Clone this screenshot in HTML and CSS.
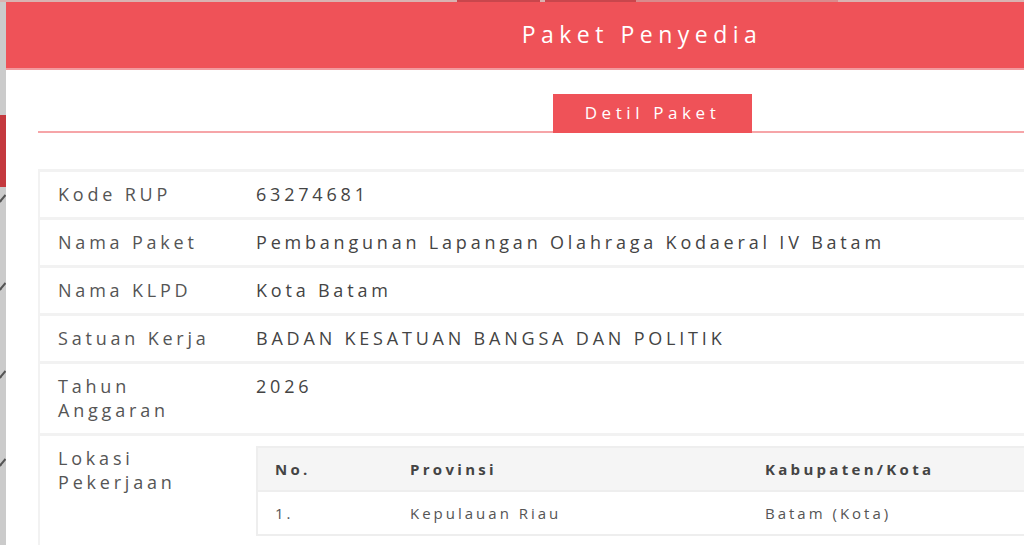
FILE: index.html
```html
<!DOCTYPE html>
<html lang="id">
<head>
    <meta charset="UTF-8">
    <meta name="viewport" content="width=device-width, initial-scale=1.0">
    <title>Paket Penyedia</title>
    <link rel="stylesheet" href="styles.css">
</head>
<body>
    <!-- navbar halaman di belakang modal -->
    <div class="page-nav">
        <span class="nav-item"></span>
        <span class="nav-item active"></span>
        <span class="nav-item gap"></span>
        <span class="nav-item active wide"></span>
        <span class="nav-item soft"></span>
    </div>

    <div class="screen">
        <!-- sisa sidebar halaman -->
        <aside class="side">
            <div class="side-active"></div>
            <div class="side-check"><i class="check"></i></div>
            <div class="side-check"><i class="check"></i></div>
            <div class="side-check"><i class="check"></i></div>
            <div class="side-check"><i class="check"></i></div>
        </aside>

        <div class="modal">
            <div class="modal-header">Paket Penyedia</div>

            <div class="modal-body">
                <div class="tabs">
                    <a class="tab active">Detil Paket</a>
                </div>

                <table class="detail">
                    <tr>
                        <th>Kode RUP</th>
                        <td>63274681</td>
                    </tr>
                    <tr>
                        <th>Nama Paket</th>
                        <td>Pembangunan Lapangan Olahraga Kodaeral IV Batam</td>
                    </tr>
                    <tr>
                        <th>Nama KLPD</th>
                        <td>Kota Batam</td>
                    </tr>
                    <tr>
                        <th>Satuan Kerja</th>
                        <td>BADAN KESATUAN BANGSA DAN POLITIK</td>
                    </tr>
                    <tr>
                        <th>Tahun<br>Anggaran</th>
                        <td>2026</td>
                    </tr>
                    <tr>
                        <th>Lokasi<br>Pekerjaan</th>
                        <td>
                            <table class="lokasi">
                                <thead>
                                    <tr>
                                        <th class="col-no">No.</th>
                                        <th class="col-prov">Provinsi</th>
                                        <th>Kabupaten/Kota</th>
                                    </tr>
                                </thead>
                                <tbody>
                                    <tr>
                                        <td>1.</td>
                                        <td>Kepulauan Riau</td>
                                        <td>Batam (Kota)</td>
                                    </tr>
                                </tbody>
                            </table>
                        </td>
                    </tr>
                </table>
            </div>
        </div>
    </div>
</body>
</html>
```

FILE: styles.css
```css
html, body {
    margin: 0;
    height: 100%;
    overflow: hidden;
}
body {
    font-family: "Open Sans", "Liberation Sans", sans-serif;
    background-color: #cbcbcb;
    color: #444;
}
.page-nav {
    display: flex;
    height: 2px;
    background-color: #d9b3b1;
}
.nav-item {
    flex-shrink: 0;
    width: 457px;
}
.nav-item.gap {
    width: 5px;
}
.nav-item.active {
    width: 83px;
    background-color: #c9464c;
}
.nav-item.wide {
    width: 91px;
}
.nav-item.soft {
    width: 202px;
    background-color: #d98b8c;
}
.screen {
    display: flex;
}
.side {
    width: 6px;
    flex-shrink: 0;
    overflow: hidden;
    padding-top: 113px;
}
.side-active {
    height: 72px;
    background-color: #c4393e;
}
.side-check {
    height: 88px;
    padding-top: 6px;
    box-sizing: border-box;
}
.check {
    display: block;
    width: 3px;
    height: 7px;
    margin-left: -1px;
    border-right: 2px solid #555;
    border-bottom: 2px solid #555;
    transform: rotate(40deg);
}
.modal {
    width: 1272px;
    flex-shrink: 0;
    background-color: white;
    height: 560px;
}
.modal-header {
    height: 66px;
    line-height: 64px;
    background-color: #ef5258;
    border-bottom: 2px solid #f29a9e;
    color: white;
    font-size: 23px;
    letter-spacing: 5.5px;
    text-align: center;
}
.modal-body {
    padding: 24px 32px;
}
.tabs {
    border-bottom: 2px solid #f6a5a8;
    padding-left: 515px;
    height: 37px;
}
.tab {
    display: inline-block;
    width: 199px;
    height: 39px;
    line-height: 38px;
    background-color: #ef5258;
    color: white;
    font-size: 17px;
    letter-spacing: 4.6px;
    text-align: center;
}
.detail {
    margin-top: 36px;
    width: 100%;
    border-collapse: collapse;
    border: 2px solid #f2f2f2;
    font-size: 18px;
    line-height: 24px;
    letter-spacing: 3.8px;
}
.detail > tbody > tr > th,
.detail > tbody > tr > td {
    border-top: 3px solid #f2f2f2;
    padding: 10px 0 11px 18px;
    vertical-align: top;
    text-align: left;
}
.detail > tbody > tr > th {
    width: 198px;
    font-weight: normal;
    color: #555;
}
.detail > tbody > tr > td {
    padding-left: 0;
}
.lokasi {
    width: 100%;
    border-collapse: collapse;
    border: 2px solid #eeeeee;
    font-size: 15px;
    line-height: 20px;
    letter-spacing: 0.2em;
}
.lokasi th,
.lokasi td {
    padding: 11px 17px;
    text-align: left;
}
.lokasi th {
    background-color: #f5f5f5;
    font-weight: bold;
    color: #444;
    letter-spacing: 0.22em;
}
.lokasi td {
    border-top: 2px solid #eeeeee;
    color: #555;
}
.col-no {
    width: 101px;
}
.col-prov {
    width: 321px;
}
```
